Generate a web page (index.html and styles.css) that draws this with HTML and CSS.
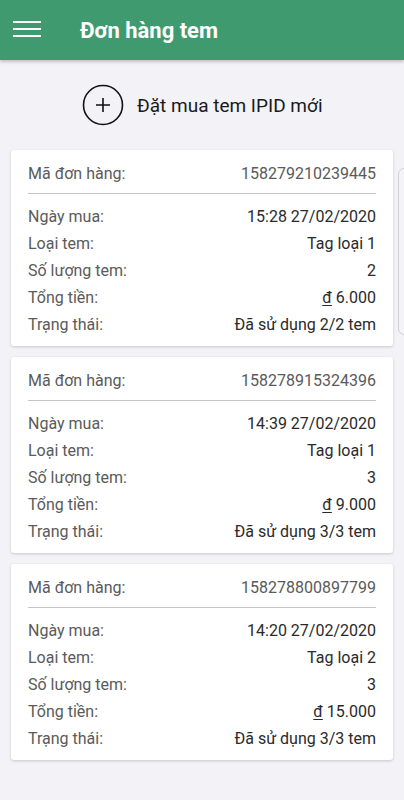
FILE: index.html
```html
<!DOCTYPE html>
<html lang="vi">
<head>
<meta charset="utf-8">
<link rel="stylesheet" href="styles.css">
</head>
<body>
<header class="topbar">
  <div class="menu"><span></span><span></span><span></span></div>
  <h1 class="title">Đơn hàng tem</h1>
</header>
<main class="content">
  <div class="new-order">
    <svg class="plus" width="42" height="42" viewBox="0 0 42 42"><circle cx="21" cy="21" r="19.5" fill="none" stroke="#111" stroke-width="1.6"/><path d="M14 21h14M21 14v14" stroke="#111" stroke-width="1.6" fill="none"/></svg>
    <span class="new-label">Đặt mua tem IPID mới</span>
  </div>
  <section class="card">
    <div class="row head"><span class="label">Mã đơn hàng:</span><span class="code">158279210239445</span></div>
    <div class="divider"></div>
    <div class="row"><span class="label">Ngày mua:</span><span class="val">15:28 27/02/2020</span></div>
    <div class="row"><span class="label">Loại tem:</span><span class="val">Tag loại 1</span></div>
    <div class="row"><span class="label">Số lượng tem:</span><span class="val">2</span></div>
    <div class="row"><span class="label">Tổng tiền:</span><span class="val"><u>đ</u> 6.000</span></div>
    <div class="row"><span class="label">Trạng thái:</span><span class="val">Đã sử dụng 2/2 tem</span></div>
  </section>
  <section class="card">
    <div class="row head"><span class="label">Mã đơn hàng:</span><span class="code">158278915324396</span></div>
    <div class="divider"></div>
    <div class="row"><span class="label">Ngày mua:</span><span class="val">14:39 27/02/2020</span></div>
    <div class="row"><span class="label">Loại tem:</span><span class="val">Tag loại 1</span></div>
    <div class="row"><span class="label">Số lượng tem:</span><span class="val">3</span></div>
    <div class="row"><span class="label">Tổng tiền:</span><span class="val"><u>đ</u> 9.000</span></div>
    <div class="row"><span class="label">Trạng thái:</span><span class="val">Đã sử dụng 3/3 tem</span></div>
  </section>
  <section class="card">
    <div class="row head"><span class="label">Mã đơn hàng:</span><span class="code">158278800897799</span></div>
    <div class="divider"></div>
    <div class="row"><span class="label">Ngày mua:</span><span class="val">14:20 27/02/2020</span></div>
    <div class="row"><span class="label">Loại tem:</span><span class="val">Tag loại 2</span></div>
    <div class="row"><span class="label">Số lượng tem:</span><span class="val">3</span></div>
    <div class="row"><span class="label">Tổng tiền:</span><span class="val"><u>đ</u> 15.000</span></div>
    <div class="row"><span class="label">Trạng thái:</span><span class="val">Đã sử dụng 3/3 tem</span></div>
  </section>
</main>
<div class="edge-tab"></div>
</body>
</html>
```
FILE: styles.css
```css
* { box-sizing: border-box; }
html, body { margin: 0; padding: 0; }
body {
  width: 404px;
  height: 800px;
  overflow: hidden;
  background: #f2f2f7;
  font-family: Roboto, "Noto Sans", sans-serif;
  color: #222;
  position: relative;
}
.topbar {
  height: 60px;
  background: #3f9a6f;
  display: flex;
  align-items: center;
  padding-left: 13px;
  box-shadow: 0 2px 3px rgba(0,0,0,0.2);
  position: relative;
  z-index: 1;
}
.menu {
  width: 28px;
  display: flex;
  flex-direction: column;
  gap: 5px;
  margin-top: -2px;
}
.menu span {
  display: block;
  height: 2px;
  background: #fff;
}
.title {
  margin: 0 0 0 39px;
  font-size: 22px;
  font-weight: 700;
  color: #fff;
}
.content {
  padding: 24px 11px 0;
}
.new-order {
  display: flex;
  align-items: center;
  padding-left: 71px;
  height: 42px;
  margin-bottom: 24px;
}
.plus { display: block; }
.new-label {
  margin-left: 13px;
  font-size: 19px;
  color: #1a1a1a;
}
.card {
  background: #fff;
  border-radius: 3px;
  box-shadow: 0 1px 3px rgba(0,0,0,0.18);
  padding: 10px 17px 8px;
  margin-bottom: 11px;
}
.row {
  display: flex;
  justify-content: space-between;
  height: 27px;
  line-height: 27px;
  font-size: 16px;
}
.row.head { margin-bottom: 6px; }
.label { color: #5a5a5a; }
.code { color: #5a5a5a; }
.val { color: #2a2a2a; }
.val u { text-decoration-thickness: 1px; text-underline-offset: 2px; }
.divider {
  height: 1px;
  background: #c4c4c4;
  margin-bottom: 9px;
}
.edge-tab {
  position: absolute;
  left: 398px;
  top: 168px;
  width: 20px;
  height: 167px;
  border: 1px solid #d0d0d6;
  border-radius: 6px;
  background: #f4f4f8;
}
```
